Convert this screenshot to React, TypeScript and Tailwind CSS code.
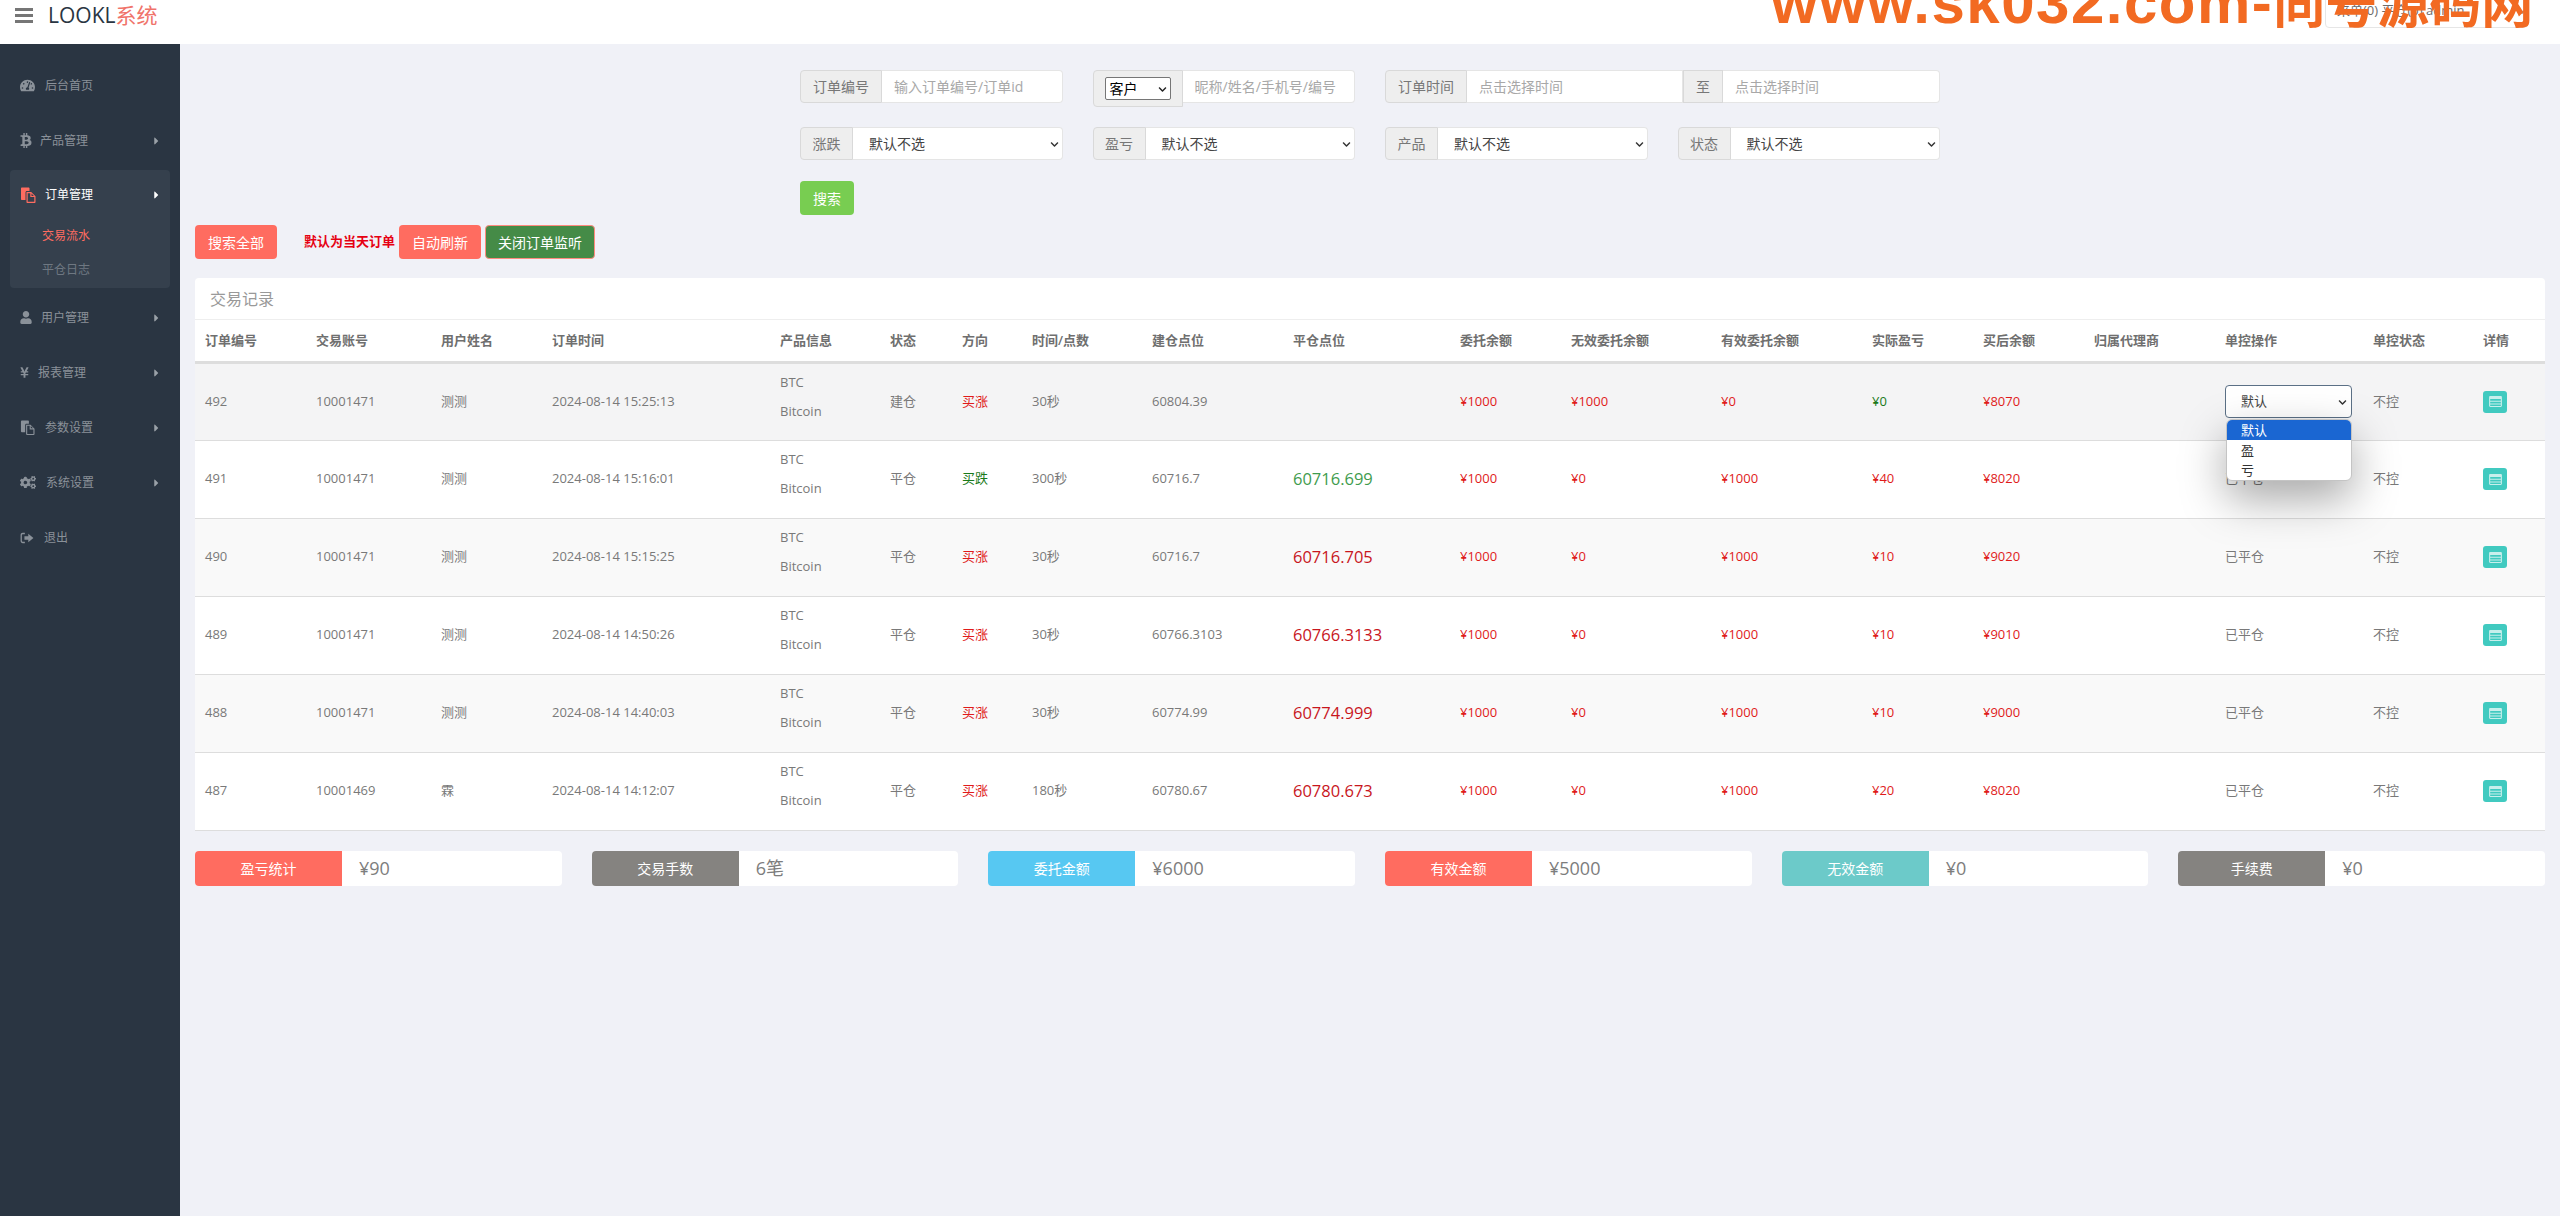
import React from "react";
import {
  FaTachometerAlt,
  FaBtc,
  FaUser,
  FaYenSign,
  FaCogs,
  FaCaretRight,
  FaCaretDown,
  FaChevronDown,
} from "react-icons/fa";

const FONT = "font-['Open_Sans','Noto_Sans_CJK_SC',sans-serif]";

function FilesIcon({ className = "" }: { className?: string }) {
  return (
    <svg viewBox="0 0 16 16" className={className} fill="currentColor">
      <path d="M1 1.5C1 .9 1.4.5 2 .5h6.5c.5 0 1 .4 1 1V4H7c-1 0-1.5.6-1.5 1.5V13H2c-.6 0-1-.4-1-1z" />
      <path fillRule="evenodd" d="M6.5 5h4.7L15.5 9.2V15c0 .6-.4 1-1 1h-7c-.6 0-1-.4-1-1zm1.2 1.2v8.6h6.6V10h-4V6.2zm3.8.3V8.9h2.4z" />
    </svg>
  );
}

function SignOutIcon({ className = "" }: { className?: string }) {
  return (
    <svg viewBox="0 0 16 14" className={className} fill="currentColor">
      <path d="M5.5 1H3C1.6 1 .5 2.1.5 3.5v7C.5 11.9 1.6 13 3 13h2.5v-1.5H3c-.6 0-1-.4-1-1v-7c0-.6.4-1 1-1h2.5z" />
      <path d="M9.5 2 15.5 7l-6 5V9H5V5h4.5z" />
    </svg>
  );
}

function BarsIcon() {
  return (
    <svg viewBox="0 0 18 15" className="ml-[15px] -mt-[14px] w-[18px] h-[15px] text-[#767676]" fill="currentColor">
      <rect x="0" y="0" width="18" height="3" />
      <rect x="0" y="6" width="18" height="3" />
      <rect x="0" y="12" width="18" height="3" />
    </svg>
  );
}

const menu = [
  { label: "后台首页", icon: <FaTachometerAlt className="w-[15px] h-[15px]" />, gap: "ml-[10px]", arrow: false },
  { label: "产品管理", icon: <FaBtc className="w-[12px] h-[15px]" />, gap: "ml-[8px]", arrow: true },
];
const menu2 = [
  { label: "用户管理", icon: <FaUser className="w-[12px] h-[13px]" />, gap: "ml-[9px]" },
  { label: "报表管理", icon: <FaYenSign className="w-[9px] h-[13px]" />, gap: "ml-[9px]" },
  { label: "参数设置", icon: <FilesIcon className="w-[15px] h-[15px]" />, gap: "ml-[10px]" },
  { label: "系统设置", icon: <FaCogs className="w-[16px] h-[15px]" />, gap: "ml-[10px]" },
];

function MenuRow({ icon, label, gap, arrow = true }: { icon: React.ReactNode; label: string; gap: string; arrow?: boolean }) {
  return (
    <div className="h-[55px] flex items-center pl-[20px] pr-[20px] text-[12px] text-[#8a9199]">
      <span className="flex items-center">{icon}</span>
      <span className={`${gap} flex-1`}>{label}</span>
      {arrow && <FaCaretRight className="w-[7px] h-[12px] text-[#9aa1a8]" />}
    </div>
  );
}

function Sidebar() {
  return (
    <aside className="w-[180px] shrink-0 bg-[#2a3542] pt-[14px]">
      {menu.map((m) => (
        <MenuRow key={m.label} {...m} />
      ))}
      <div className="mx-[10px] mt-[2px] h-[118px] rounded-[4px] bg-[#35404d]">
        <div className="h-[50px] flex items-center pl-[10px] pr-[10px] text-[12px] text-white">
          <FilesIcon className="w-[16px] h-[16px] text-[#ff6c60]" />
          <span className="ml-[9px] flex-1">订单管理</span>
          <FaCaretRight className="w-[7px] h-[12px]" />
        </div>
        <div className="pl-[32px] text-[12px] text-[#ff6c60] h-[32px] flex items-center">交易流水</div>
        <div className="pl-[32px] text-[12px] text-[#6f7882] h-[36px] flex items-center">平仓日志</div>
      </div>
      <div className="h-[2px]" />
      {menu2.map((m) => (
        <MenuRow key={m.label} {...m} />
      ))}
      <MenuRow icon={<SignOutIcon className="w-[14px] h-[12px]" />} label="退出" gap="ml-[10px]" arrow={false} />
    </aside>
  );
}

function Header() {
  return (
    <header className="relative h-[44px] bg-white flex items-center shrink-0 overflow-hidden">
      <BarsIcon />
      <div className="ml-[15px] -mt-[14px] text-[21px] leading-[28px] text-[#2a3542]">
        LOOKL<span className="text-[#f0736a]">系统</span>
      </div>
      <div className="absolute left-[2325px] top-[-6px] h-[34px] w-[203px] rounded-[4px] border border-[#e6e6e6] flex items-center pl-[11px] text-[13px] text-[#6c6c6c]">
        来单(0) 平仓(0) admin
        <FaCaretDown className="absolute right-[0px] top-[12px] w-[10px] h-[10px] text-[#999]" />
      </div>
      <div className="absolute left-[1771px] top-[-32px] flex items-baseline whitespace-nowrap leading-[70px] font-bold text-[#f26a22] font-['Liberation_Sans','Noto_Sans_CJK_SC',sans-serif]">
        <span className="text-[60px] tracking-[1.5px]">www.sk032.com-</span>
        <span className="text-[52px]">同号源码网</span>
      </div>
    </header>
  );
}

const addon = "flex items-center justify-center bg-[#eeeeee] border border-[#d9d9d9] rounded-l-[4px] text-[14px] text-[#777] h-[33px] shrink-0";

function FakeSelect({ label, addonW }: { label: string; addonW: string }) {
  return (
    <div className="flex h-[33px]">
      <div className={`${addon} ${addonW}`}>{label}</div>
      <div className="relative flex-1 bg-white border border-[#e5e5e5] border-l-0 rounded-r-[4px] flex items-center pl-[16px] text-[14px] text-[#444]">
        默认不选
        <FaChevronDown className="absolute right-[3px] top-[12px] w-[9px] h-[9px] text-[#333]" />
      </div>
    </div>
  );
}

function Field({ ph, className = "" }: { ph: string; className?: string }) {
  return (
    <div className={`h-[33px] bg-white border border-[#e5e5e5] border-l-0 flex items-center pl-[12px] text-[14px] text-[#a8a8a8] ${className}`}>
      {ph}
    </div>
  );
}

function Filters() {
  return (
    <div className="w-[1140px] mx-auto pt-[26px] grid grid-cols-4 gap-x-[30px]">
      <div className="flex h-[33px]">
        <div className={`${addon} w-[82px]`}>订单编号</div>
        <Field ph="输入订单编号/订单id" className="flex-1 rounded-r-[4px]" />
      </div>
      <div className="flex h-[33px]">
        <div className={`${addon} w-[90px] !h-[37px] items-center`}>
          <div className="relative w-[66px] h-[23px] bg-white border border-[#767676] rounded-[2px] flex items-center pl-[4px] text-[14px] text-black">
            客户
            <FaChevronDown className="absolute right-[3px] top-[7px] w-[9px] h-[9px] text-[#222]" />
          </div>
        </div>
        <Field ph="昵称/姓名/手机号/编号" className="flex-1 rounded-r-[4px]" />
      </div>
      <div className="col-span-2 flex h-[33px]">
        <div className={`${addon} w-[82px]`}>订单时间</div>
        <Field ph="点击选择时间" className="w-[216px]" />
        <div className="h-[33px] w-[40px] shrink-0 flex items-center justify-center bg-[#eeeeee] border border-[#d9d9d9] text-[14px] text-[#777]">至</div>
        <Field ph="点击选择时间" className="flex-1 rounded-r-[4px]" />
      </div>
      <div className="mt-[24px]">
        <FakeSelect label="涨跌" addonW="w-[53px]" />
      </div>
      <div className="mt-[24px]">
        <FakeSelect label="盈亏" addonW="w-[53px]" />
      </div>
      <div className="mt-[24px]">
        <FakeSelect label="产品" addonW="w-[53px]" />
      </div>
      <div className="mt-[24px]">
        <FakeSelect label="状态" addonW="w-[53px]" />
      </div>
      <div className="mt-[21px] col-span-4">
        <div className="w-[54px] h-[34px] rounded-[4px] bg-[#78cd51] text-white text-[14px] flex items-center justify-center">搜索</div>
      </div>
    </div>
  );
}

function Actions() {
  const btn = "h-[34px] rounded-[4px] text-white text-[14px] flex items-center justify-center";
  return (
    <div className="flex items-center mt-[10px] h-[34px]">
      <div className={`${btn} w-[82px] bg-[#ff6c60]`}>搜索全部</div>
      <div className="ml-[27px] w-[95px] text-[13px] font-bold text-[#e60012]">默认为当天订单</div>
      <div className={`${btn} w-[82px] bg-[#ff6c60]`}>自动刷新</div>
      <div className={`${btn} ml-[4px] w-[110px] bg-[#458b47] border border-[#ff8a7e]`}>关闭订单监听</div>
    </div>
  );
}

const cols = [111, 125, 111, 228, 110, 72, 70, 120, 141, 167, 111, 150, 151, 111, 111, 131, 148, 110, 72];
const heads = ["订单编号", "交易账号", "用户姓名", "订单时间", "产品信息", "状态", "方向", "时间/点数", "建仓点位", "平仓点位", "委托余额", "无效委托余额", "有效委托余额", "实际盈亏", "买后余额", "归属代理商", "单控操作", "单控状态", "详情"];

type Row = {
  id: number; acc: number; name: string; time: string; status: string; dir: string; secs: string;
  open: string; close: string; closeColor: string; inv: string; eff: string; pnl: string; pnlGreen?: boolean; after: string; bg: string;
};

const rows: Row[] = [
  { id: 492, acc: 10001471, name: "测测", time: "2024-08-14 15:25:13", status: "建仓", dir: "买涨", secs: "30秒", open: "60804.39", close: "", closeColor: "", inv: "¥1000", eff: "¥0", pnl: "¥0", pnlGreen: true, after: "¥8070", bg: "bg-[#f4f4f5]" },
  { id: 491, acc: 10001471, name: "测测", time: "2024-08-14 15:16:01", status: "平仓", dir: "买跌", secs: "300秒", open: "60716.7", close: "60716.699", closeColor: "text-[#3f9c4e]", inv: "¥0", eff: "¥1000", pnl: "¥40", after: "¥8020", bg: "bg-white" },
  { id: 490, acc: 10001471, name: "测测", time: "2024-08-14 15:15:25", status: "平仓", dir: "买涨", secs: "30秒", open: "60716.7", close: "60716.705", closeColor: "text-[#c8161d]", inv: "¥0", eff: "¥1000", pnl: "¥10", after: "¥9020", bg: "bg-[#f9f9f9]" },
  { id: 489, acc: 10001471, name: "测测", time: "2024-08-14 14:50:26", status: "平仓", dir: "买涨", secs: "30秒", open: "60766.3103", close: "60766.3133", closeColor: "text-[#c8161d]", inv: "¥0", eff: "¥1000", pnl: "¥10", after: "¥9010", bg: "bg-white" },
  { id: 488, acc: 10001471, name: "测测", time: "2024-08-14 14:40:03", status: "平仓", dir: "买涨", secs: "30秒", open: "60774.99", close: "60774.999", closeColor: "text-[#c8161d]", inv: "¥0", eff: "¥1000", pnl: "¥10", after: "¥9000", bg: "bg-[#f9f9f9]" },
  { id: 487, acc: 10001469, name: "霖", time: "2024-08-14 14:12:07", status: "平仓", dir: "买涨", secs: "180秒", open: "60780.67", close: "60780.673", closeColor: "text-[#c8161d]", inv: "¥0", eff: "¥1000", pnl: "¥20", after: "¥8020", bg: "bg-white" },
];

function TableIcon() {
  return (
    <svg viewBox="0 0 14 12" className="w-[13px] h-[11px]" fill="currentColor">
      <path fillRule="evenodd" d="M1.3 0h11.4C13.4 0 14 .6 14 1.3v9.4c0 .7-.6 1.3-1.3 1.3H1.3C.6 12 0 11.4 0 10.7V1.3C0 .6.6 0 1.3 0zM1.2 3.4v1.9h11.6V3.4zm0 3v1.7h11.6V6.4zm0 2.8v1.6h11.6V9.2z" />
    </svg>
  );
}

function Trades() {
  const td = "pl-[10px] pr-0 text-[13px] align-middle";
  const red = `${td} text-[#e01b1b]`;
  return (
    <section className="mt-[19px] bg-white rounded-t-[4px]">
      <div className="h-[42px] flex items-center pl-[15px] text-[16px] text-[#999] border-b border-[#eeeeee]">交易记录</div>
      <table className="table-fixed w-[2350px] border-collapse text-[#797979]">
        <colgroup>
          {cols.map((w, i) => (
            <col key={i} span={1} width={w} />
          ))}
        </colgroup>
        <thead>
          <tr className="h-[42px] border-b-[3px] border-[#dddddd]">
            {heads.map((h) => (
              <th key={h} className="pl-[10px] text-left text-[13px] font-semibold text-[#6f6f6f]">{h}</th>
            ))}
          </tr>
        </thead>
        <tbody>
          {rows.map((r, idx) => (
            <tr key={r.id} className={`h-[78px] border-b border-[#dddddd] ${r.bg}`}>
              <td className={td}>{r.id}</td>
              <td className={td}>{r.acc}</td>
              <td className={td}>{r.name}</td>
              <td className={td}>{r.time}</td>
              <td className={td}>
                <div className="pb-[10px]">
                  <div className="leading-[29px]">BTC</div>
                  <div className="leading-[29px]">Bitcoin</div>
                </div>
              </td>
              <td className={td}>{r.status}</td>
              <td className={`${td} ${r.dir === "买涨" ? "text-[#e01b1b]" : "text-[#1a7a1a]"}`}>{r.dir}</td>
              <td className={td}>{r.secs}</td>
              <td className={td}>{r.open}</td>
              <td className={`${td} !text-[16.5px] ${r.closeColor}`}>{r.close}</td>
              <td className={red}>¥1000</td>
              <td className={red}>{r.inv}</td>
              <td className={red}>{r.eff}</td>
              <td className={`${td} ${r.pnlGreen ? "text-[#1a7a1a]" : "text-[#e01b1b]"}`}>{r.pnl}</td>
              <td className={red}>{r.after}</td>
              <td className={td}></td>
              <td className={`${td} relative`}>
                {idx === 0 ? (
                  <div className="relative w-[127px] h-[33px] bg-white border border-[#5b7086] rounded-[4px] flex items-center pl-[15px] text-[13px] text-[#444]">
                    默认
                    <FaChevronDown className="absolute right-[4px] top-[12px] w-[9px] h-[9px] text-[#333]" />
                    <div className="absolute left-[0px] top-[33px] w-[126px] z-10 bg-white rounded-[6px] border border-[#c4c4c4] overflow-hidden shadow-[0_18px_45px_rgba(0,0,0,0.35)] text-[13px] text-[#333]">
                      <div className="h-[20px] leading-[20px] pl-[14px] bg-[#1a66d2] text-white">默认</div>
                      <div className="h-[20px] leading-[20px] pl-[14px]">盈</div>
                      <div className="h-[20px] leading-[20px] pl-[14px]">亏</div>
                    </div>
                  </div>
                ) : (
                  "已平仓"
                )}
              </td>
              <td className={td}>不控</td>
              <td className={td}>
                <div className="w-[24px] h-[22px] rounded-[3px] bg-[#41cac0] text-[#c8efec] flex items-center justify-center">
                  <TableIcon />
                </div>
              </td>
            </tr>
          ))}
        </tbody>
      </table>
    </section>
  );
}

const stats = [
  { label: "盈亏统计", value: "¥90", color: "bg-[#ff6c60]" },
  { label: "交易手数", value: "6笔", color: "bg-[#858380]" },
  { label: "委托金额", value: "¥6000", color: "bg-[#57c8f2]" },
  { label: "有效金额", value: "¥5000", color: "bg-[#ff6c60]" },
  { label: "无效金额", value: "¥0", color: "bg-[#6ccac9]" },
  { label: "手续费", value: "¥0", color: "bg-[#858380]" },
];

function Stats() {
  return (
    <div className="mt-[20px] grid grid-cols-6 gap-x-[30px]">
      {stats.map((s) => (
        <div key={s.label} className="flex h-[35px] rounded-[4px] overflow-hidden bg-white">
          <div className={`w-[147px] ${s.color} text-white text-[14px] flex items-center justify-center`}>{s.label}</div>
          <div className="flex-1 flex items-center pl-[17px] text-[18px] text-[#7d7d7d]">{s.value}</div>
        </div>
      ))}
    </div>
  );
}

export default function App() {
  return (
    <div className={`h-[1216px] w-[2560px] overflow-hidden flex flex-col bg-[#f0f1f7] ${FONT}`}>
      <Header />
      <div className="flex flex-1 min-h-0">
        <Sidebar />
        <main className="flex-1 px-[15px]">
          <Filters />
          <Actions />
          <Trades />
          <Stats />
        </main>
      </div>
    </div>
  );
}
